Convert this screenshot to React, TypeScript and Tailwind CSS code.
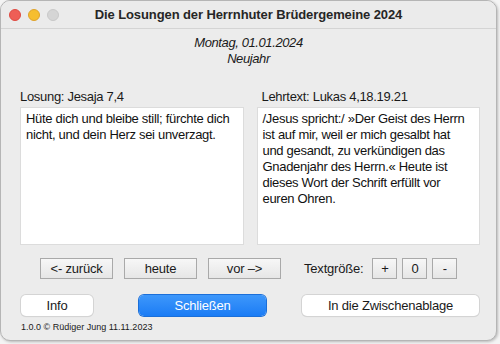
import React from 'react'

const font = { fontFamily: '"Liberation Sans", Arial, sans-serif' }

function SquareButton({ label, className = '' }: { label: string; className?: string }) {
  return (
    <div
      className={`flex h-[21px] items-center justify-center border border-[#a9a9a9] bg-gradient-to-b from-[#f7f7f7] to-[#e6e6e6] text-[13px] tracking-[-0.2px] text-[#1a1a1a] ${className}`}
    >
      {label}
    </div>
  )
}

function PillButton({ label, className = '', primary = false }: { label: string; className?: string; primary?: boolean }) {
  return (
    <div
      className={`flex h-[21px] items-center justify-center rounded-[5px] text-[13px] tracking-[-0.2px] ${
        primary
          ? 'bg-gradient-to-b from-[#3d97fb] to-[#1a7cf5] text-white shadow-[0_0_0_1px_#1b6fd9]'
          : 'bg-white text-[#1a1a1a] shadow-[0_0_0_1px_#d4d4d4,0_1px_1px_rgba(0,0,0,0.12)]'
      } ${className}`}
    >
      {label}
    </div>
  )
}

export default function App() {
  return (
    <div className="h-[344px] w-[500px] bg-[#f4f4f4]" style={font}>
      <div className="flex h-[341px] w-[497px] flex-col overflow-hidden rounded-[10px] border border-[#b5b5b5] bg-[#ececec] shadow-[1px_1px_3px_rgba(0,0,0,0.25)]">
        {/* Title bar */}
        <div className="relative flex h-[28px] shrink-0 items-center justify-center border-b border-[#d4d4d4] bg-[#ebebeb]">
          <div className="absolute left-[8px] top-[8px] flex gap-[7px]">
            <span className="h-[12px] w-[12px] rounded-full border border-[#de4a41] bg-[#ee5e56]" />
            <span className="h-[12px] w-[12px] rounded-full border border-[#dea22a] bg-[#f6be30]" />
            <span className="h-[12px] w-[12px] rounded-full border border-[#c8c8c8] bg-[#d5d5d5]" />
          </div>
          <div className="text-[13px] font-bold tracking-[-0.1px] text-[#262626]">Die Losungen der Herrnhuter Brüdergemeine 2024</div>
        </div>

        {/* Date */}
        <div className="mt-[6px] flex flex-col items-center text-[13px] italic leading-[16px] tracking-[-0.4px] text-[#1a1a1a]">
          <div>Montag, 01.01.2024</div>
          <div>Neujahr</div>
        </div>

        {/* Texts */}
        <div className="mt-[22px] flex gap-[13px] pl-[19px] pr-[16px] text-[13px] leading-[16px] tracking-[-0.3px]">
          <div className="flex w-[224px] flex-col">
            <div className="text-[#1a1a1a]">Losung: Jesaja 7,4</div>
            <div className="mt-[2px] h-[138px] border border-[#dcdcdc] bg-white px-[5px] py-[3px] text-[#111]">
              Hüte dich und bleibe still; fürchte dich nicht, und dein Herz sei unverzagt.
            </div>
          </div>
          <div className="flex w-[224px] flex-col">
            <div className="pl-[5px] text-[#1a1a1a]">Lehrtext: Lukas 4,18.19.21</div>
            <div className="mt-[2px] h-[138px] border border-[#dcdcdc] bg-white px-[5px] py-[3px] text-[#111]">
              /Jesus spricht:/ »Der Geist des Herrn ist auf mir, weil er mich gesalbt hat und gesandt, zu verkündigen das Gnadenjahr des Herrn.« Heute ist dieses Wort der Schrift erfüllt vor euren Ohren.
            </div>
          </div>
        </div>

        {/* Navigation row */}
        <div className="mt-[13px] flex items-center pl-[39px]">
          <SquareButton label="<- zurück" className="w-[73px]" />
          <SquareButton label="heute" className="ml-[11px] w-[73px]" />
          <SquareButton label="vor –>" className="ml-[11px] w-[73px]" />
          <div className="ml-[23px] text-[13px] tracking-[-0.2px] text-[#1a1a1a]">Textgröße:</div>
          <SquareButton label="+" className="ml-[9px] w-[25px]" />
          <SquareButton label="0" className="ml-[5px] w-[25px]" />
          <SquareButton label="-" className="ml-[5px] w-[25px]" />
        </div>

        {/* Action row */}
        <div className="mt-[16px] flex items-center pl-[20px]">
          <PillButton label="Info" className="w-[72px]" />
          <PillButton label="Schließen" primary className="ml-[46px] w-[127px]" />
          <PillButton label="In die Zwischenablage" className="ml-[36px] w-[177px]" />
        </div>

        <div className="mt-[5px] pl-[20px] text-[9px] text-[#1a1a1a]">1.0.0 © Rüdiger Jung 11.11.2023</div>
      </div>
    </div>
  )
}
